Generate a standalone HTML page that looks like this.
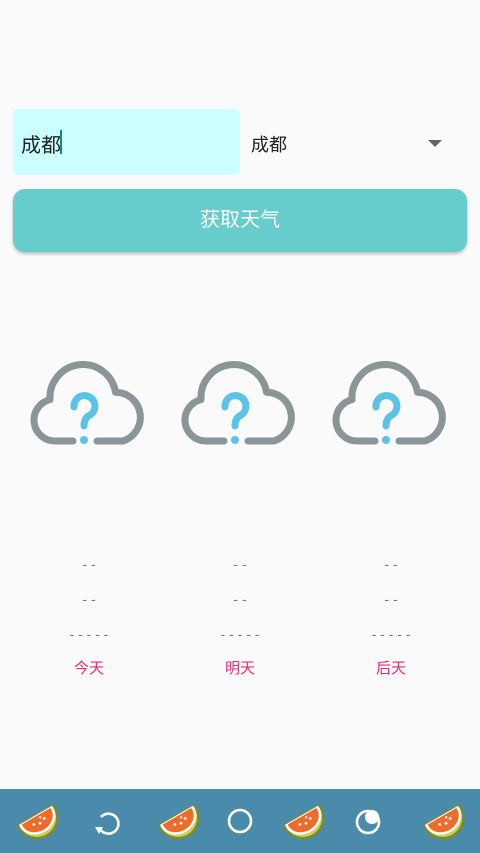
<!DOCTYPE html>
<html><head><meta charset="utf-8"><style>
*{margin:0;padding:0;box-sizing:border-box}
body{width:480px;height:853px;background:#fafafa;position:relative;overflow:hidden;font-family:"Liberation Sans","Noto Sans CJK SC",sans-serif}
.inp{position:absolute;left:13px;top:109px;width:227px;height:66px;background:#ccffff;border-radius:6px}
.inp span{position:absolute;left:8px;top:20px;font-size:20px;color:#222}
.cur{position:absolute;left:60px;top:130px;width:2px;height:24px;background:#0f8a7a}
.sel{position:absolute;left:251px;top:131px;font-size:18px;color:#222}
.tri{position:absolute;left:428px;top:140px;width:0;height:0;border-left:7px solid transparent;border-right:7px solid transparent;border-top:7px solid #666}
.btn{position:absolute;left:13px;top:189px;width:454px;height:63px;background:#66cccc;border-radius:12px;box-shadow:0 2px 3px rgba(0,0,0,.25);color:#fff;font-size:20px;text-align:center;line-height:63px}
.cloud{position:absolute;top:350px;left:0;width:180px;height:110px}
.col{position:absolute;top:552px;width:100px;text-align:center;color:#777;font-size:14px}
.col div{height:35px;line-height:24px}
.col .l{color:#ee2b70;font-size:15px}
.bar{position:absolute;left:0;top:789px;width:480px;height:64px;background:#4a8aab}
.ic{position:absolute;top:0}
</style></head><body>
<div class="inp"><span>成都</span></div>
<div class="cur"></div>
<div class="sel">成都</div>
<div class="tri"></div>
<div class="btn">获取天气</div>

<svg width="0" height="0" style="position:absolute"><defs>
<g id="cl">
<path d="M73,441 H55 A21,21 0 0 1 50,399.6 A33,33 0 0 1 115.5,392.2 A25,25 0 0 1 123,441 H97" fill="none" stroke="#8a9598" stroke-width="7" stroke-linecap="round" stroke-linejoin="round"/>
<path d="M74,407 A10.5,10.5 0 1 1 90,415 Q84,418 84,426" fill="none" stroke="#5bc3e8" stroke-width="7" stroke-linecap="round"/>
<circle cx="84" cy="440" r="4" fill="#5bc3e8"/>
</g>
<g id="wm">
<g transform="translate(23,19) rotate(-30)">
<path d="M-21,-4 A21.4,21.4 0 1 0 21,-4 Z" fill="#7d8a2e"/>
<path d="M-19,-3 A19.2,19.2 0 1 0 19,-3 Z" fill="#c9d35a"/>
<path d="M-19,-3 A19.2,16.5 0 1 0 19,-3 Z" fill="#fff"/>
<path d="M-16.5,-2 A16.6,14 0 1 0 16.5,-2 Z" fill="#f06a2a"/>
<circle cx="-6" cy="4" r="1.4" fill="#fff"/><circle cx="0" cy="6" r="1.4" fill="#fff"/><circle cx="6" cy="4" r="1.4" fill="#fff"/><circle cx="3" cy="1" r="1.2" fill="#fff"/>
</g></g>
</defs></svg>

<svg class="cloud" viewBox="0 350 180 110"><use href="#cl"/></svg>
<svg class="cloud" style="left:151px" viewBox="0 350 180 110"><use href="#cl"/></svg>
<svg class="cloud" style="left:302px" viewBox="0 350 180 110"><use href="#cl"/></svg>

<div class="col" style="left:39px"><div>- -</div><div>- -</div><div>- - - - -</div><div class="l">今天</div></div>
<div class="col" style="left:190px"><div>- -</div><div>- -</div><div>- - - - -</div><div class="l">明天</div></div>
<div class="col" style="left:341px"><div>- -</div><div>- -</div><div>- - - - -</div><div class="l">后天</div></div>

<div class="bar">
<svg class="ic" style="left:14px;top:10px" width="46" height="46"><use href="#wm"/></svg>
<svg class="ic" style="left:155px;top:10px" width="46" height="46"><use href="#wm"/></svg>
<svg class="ic" style="left:280px;top:10px" width="46" height="46"><use href="#wm"/></svg>
<svg class="ic" style="left:420px;top:10px" width="46" height="46"><use href="#wm"/></svg>
<svg class="ic" style="left:92px;top:18px" width="30" height="30"><path d="M9,10 A10,10 0 1 1 8,22" fill="none" stroke="#fff" stroke-width="2.6"/><path d="M3,20 L11,20 L7,27 Z" fill="#fff"/></svg>
<svg class="ic" style="left:226px;top:18px" width="28" height="28"><circle cx="14" cy="14" r="11" fill="none" stroke="#fff" stroke-width="2.6"/></svg>
<svg class="ic" style="left:354px;top:17px" width="30" height="30"><circle cx="14" cy="16" r="11" fill="none" stroke="#fff" stroke-width="2.6"/><circle cx="18" cy="11" r="7" fill="#fff"/></svg>
</div>
</body></html>
